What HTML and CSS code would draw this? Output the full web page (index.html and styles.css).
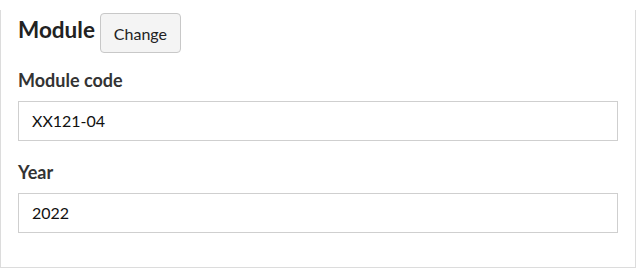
FILE: index.html
```html
<!DOCTYPE html>
<html>
<head>
<meta charset="utf-8">
<link rel="stylesheet" href="styles.css">
</head>
<body>
<div class="panel">
  <div class="head">
    <h2 class="title">Module</h2>
    <button class="btn">Change</button>
  </div>
  <div class="field first">
    <label class="label">Module code</label>
    <div class="input">XX121-04</div>
  </div>
  <div class="field">
    <label class="label">Year</label>
    <div class="input">2022</div>
  </div>
</div>
</body>
</html>
```
FILE: styles.css
```css
html, body {
  margin: 0;
  padding: 0;
  background: #fff;
}
body {
  font-family: Lato, "Noto Sans", sans-serif;
  color: #222;
}
.panel {
  margin-top: 10px;
  width: 636px;
  height: 258px;
  border: 1px solid #dcdcdc;
  border-top: 0;
  padding: 3px 17px 0 17px;
  box-sizing: border-box;
}
.head {
  display: flex;
  align-items: center;
  gap: 5px;
  height: 40px;
}
.title {
  margin: 0;
  font-size: 22.5px;
  font-weight: 700;
  color: #222;
  line-height: 26px;
  position: relative;
  top: -3px;
}
.btn {
  font-family: Lato, "Noto Sans", sans-serif;
  font-size: 16px;
  color: #222;
  background: #f4f4f4;
  border: 1px solid #c8c8c8;
  border-radius: 4px;
  height: 40px;
  width: 81px;
  padding: 0;
  box-sizing: border-box;
}
.field {
  display: flex;
  flex-direction: column;
  margin-top: 21px;
}
.field.first {
  margin-top: 17px;
}
.label {
  font-size: 18px;
  font-weight: 700;
  color: #333;
  line-height: 21px;
  margin-bottom: 10px;
}
.input {
  height: 40px;
  width: 600px;
  box-sizing: border-box;
  border: 1px solid #cfcfcf;
  padding: 0 13px;
  font-size: 16px;
  line-height: 38px;
  color: #111;
}
```
